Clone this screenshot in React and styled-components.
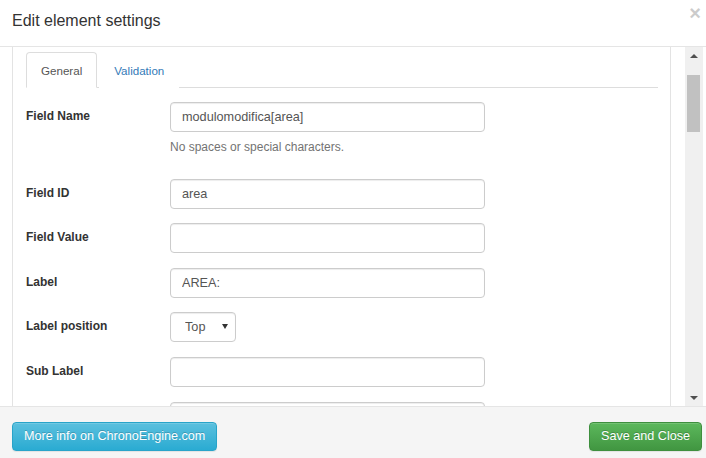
import React, { useState } from "react";
import styled, { createGlobalStyle } from "styled-components";

const GlobalStyle = createGlobalStyle`
  html, body {
    margin: 0;
    padding: 0;
    background: #fff;
  }
  body {
    font-family: "Liberation Sans", Arial, sans-serif;
    color: #333;
  }
  * {
    box-sizing: border-box;
  }
`;

const Modal = styled.div`
  width: 706px;
  height: 458px;
  display: flex;
  flex-direction: column;
  background: #fff;
  overflow: hidden;
`;

const Header = styled.div`
  height: 47px;
  flex: none;
  display: flex;
  justify-content: space-between;
  align-items: flex-start;
  padding: 0 5px 0 12px;
  border-bottom: 1px solid #e5e5e5;
`;

const Title = styled.h4`
  margin: 0;
  padding-top: 10px;
  font-size: 16px;
  line-height: 22px;
  font-weight: normal;
  color: #333;
`;

const CloseButton = styled.button`
  margin-top: 3px;
  padding: 0;
  border: 0;
  background: none;
  font-family: inherit;
  font-size: 20px;
  font-weight: bold;
  line-height: 1;
  color: #000;
  opacity: 0.2;
  cursor: pointer;
`;

const Body = styled.div`
  flex: 1;
  min-height: 0;
  display: flex;
  padding: 0 3px 0 12px;
`;

const Panel = styled.div`
  width: 659px;
  flex: none;
  margin-right: 14px;
  border-left: 1px solid #e3e3e3;
  border-right: 1px solid #e3e3e3;
  padding: 5px 12px 0 13px;
  overflow: hidden;
`;

const Tabs = styled.ul`
  display: flex;
  margin: 0;
  padding: 0;
  list-style: none;
  border-bottom: 1px solid #ddd;
`;

const Tab = styled.li`
  margin-bottom: -1px;
  margin-right: 2px;
  padding: 9px 14px 8px;
  font-size: 11.6px;
  line-height: 17px;
  border: 1px solid ${({ $active }) => ($active ? "#ddd" : "transparent")};
  border-bottom-color: ${({ $active }) => ($active ? "#fff" : "transparent")};
  border-radius: 4px 4px 0 0;
  background: #fff;
  color: ${({ $active }) => ($active ? "#555" : "#337ab7")};
  cursor: pointer;
`;

const TabContent = styled.div`
  padding-top: 14px;
`;

const FormGroup = styled.div`
  display: flex;
  align-items: flex-start;
  margin-bottom: 14.6px;
`;

const ControlLabel = styled.label`
  width: 144px;
  flex: none;
  padding-top: 6px;
  font-size: 12px;
  line-height: 17px;
  font-weight: bold;
  color: #333;
`;

const Control = styled.div`
  display: flex;
  flex-direction: column;
`;

const Input = styled.input`
  width: 315px;
  height: 30px;
  padding: 0 11px;
  border: 1px solid #ccc;
  border-radius: 4px;
  box-shadow: inset 0 1px 1px rgba(0, 0, 0, 0.075);
  font-family: inherit;
  font-size: 12.7px;
  color: #555;
  background: #fff;
  outline: none;
`;

const HelpBlock = styled.span`
  display: block;
  margin: 7px 0 8px;
  font-size: 12px;
  line-height: 17px;
  color: #737373;
`;

const SelectWrap = styled.div`
  position: relative;
  width: 66px;
  height: 30px;
`;

const Select = styled.select`
  appearance: none;
  width: 100%;
  height: 100%;
  padding: 0 0 0 14px;
  border: 1px solid #ccc;
  border-radius: 4px;
  box-shadow: inset 0 1px 1px rgba(0, 0, 0, 0.075);
  font-family: inherit;
  font-size: 12.7px;
  color: #555;
  background: #fff;
  outline: none;
`;

const Caret = styled.span`
  position: absolute;
  right: 8px;
  top: 12px;
  width: 0;
  height: 0;
  border-left: 3px solid transparent;
  border-right: 3px solid transparent;
  border-top: 5px solid #333;
  pointer-events: none;
`;

const Scrollbar = styled.div`
  width: 18px;
  flex: none;
  display: flex;
  flex-direction: column;
  background: #f0f0f0;
`;

const ScrollArrow = styled.div`
  height: 17px;
  flex: none;
  display: flex;
  align-items: center;
  justify-content: center;

  &::after {
    content: "";
    border-left: 4px solid transparent;
    border-right: 4px solid transparent;
    ${({ $down }) =>
      $down ? "border-top: 4px solid #505050;" : "border-bottom: 4px solid #505050;"}
  }
`;

const ScrollTrack = styled.div`
  flex: 1;
  padding: 11px 3px 0 2px;
`;

const ScrollThumb = styled.div`
  height: 57px;
  background: #c1c1c1;
`;

const Footer = styled.div`
  height: 52px;
  flex: none;
  display: flex;
  justify-content: space-between;
  align-items: flex-start;
  padding: 15px 4px 0 12px;
  border-top: 1px solid #e5e5e5;
  background: #f5f5f5;
`;

const variants = {
  info: { from: "#5bc0de", to: "#2aabd2", border: "#28a4c9" },
  success: { from: "#5cb85c", to: "#419641", border: "#3e8f3e" },
};

const Button = styled.button`
  height: 29px;
  padding: 0 11px;
  font-family: inherit;
  font-size: 12.6px;
  line-height: 17px;
  color: #fff;
  text-shadow: 0 -1px 0 rgba(0, 0, 0, 0.2);
  border: 1px solid ${({ $variant }) => variants[$variant].border};
  border-radius: 4px;
  background-image: linear-gradient(
    to bottom,
    ${({ $variant }) => variants[$variant].from} 0%,
    ${({ $variant }) => variants[$variant].to} 100%
  );
  box-shadow: inset 0 1px 0 rgba(255, 255, 255, 0.15), 0 1px 1px rgba(0, 0, 0, 0.075);
  cursor: pointer;
`;

// the last row is scrolled below the footer, only its input top shows
const fields = [
  { label: "Field Name", value: "modulomodifica[area]", help: "No spaces or special characters." },
  { label: "Field ID", value: "area" },
  { label: "Field Value", value: "" },
  { label: "Label", value: "AREA:" },
  { label: "Label position", select: ["Top", "Left", "Right", "Bottom"] },
  { label: "Sub Label", value: "" },
  { label: "", value: "" },
];

export default function App() {
  const [tab, setTab] = useState("general");

  return (
    <>
      <GlobalStyle />
      <Modal>
        <Header>
          <Title>Edit element settings</Title>
          <CloseButton type="button">×</CloseButton>
        </Header>
        <Body>
          <Panel>
            <Tabs>
              <Tab $active={tab === "general"} onClick={() => setTab("general")}>
                General
              </Tab>
              <Tab $active={tab === "validation"} onClick={() => setTab("validation")}>
                Validation
              </Tab>
            </Tabs>
            <TabContent>
              {fields.map((f, i) => (
                <FormGroup key={i}>
                  <ControlLabel>{f.label}</ControlLabel>
                  <Control>
                    {f.select ? (
                      <SelectWrap>
                        <Select defaultValue={f.select[0]}>
                          {f.select.map((o) => (
                            <option key={o}>{o}</option>
                          ))}
                        </Select>
                        <Caret />
                      </SelectWrap>
                    ) : (
                      <Input type="text" defaultValue={f.value} />
                    )}
                    {f.help && <HelpBlock>{f.help}</HelpBlock>}
                  </Control>
                </FormGroup>
              ))}
            </TabContent>
          </Panel>
          <Scrollbar>
            <ScrollArrow />
            <ScrollTrack>
              <ScrollThumb />
            </ScrollTrack>
            <ScrollArrow $down />
          </Scrollbar>
        </Body>
        <Footer>
          <Button type="button" $variant="info">
            More info on ChronoEngine.com
          </Button>
          <Button type="button" $variant="success">
            Save and Close
          </Button>
        </Footer>
      </Modal>
    </>
  );
}
